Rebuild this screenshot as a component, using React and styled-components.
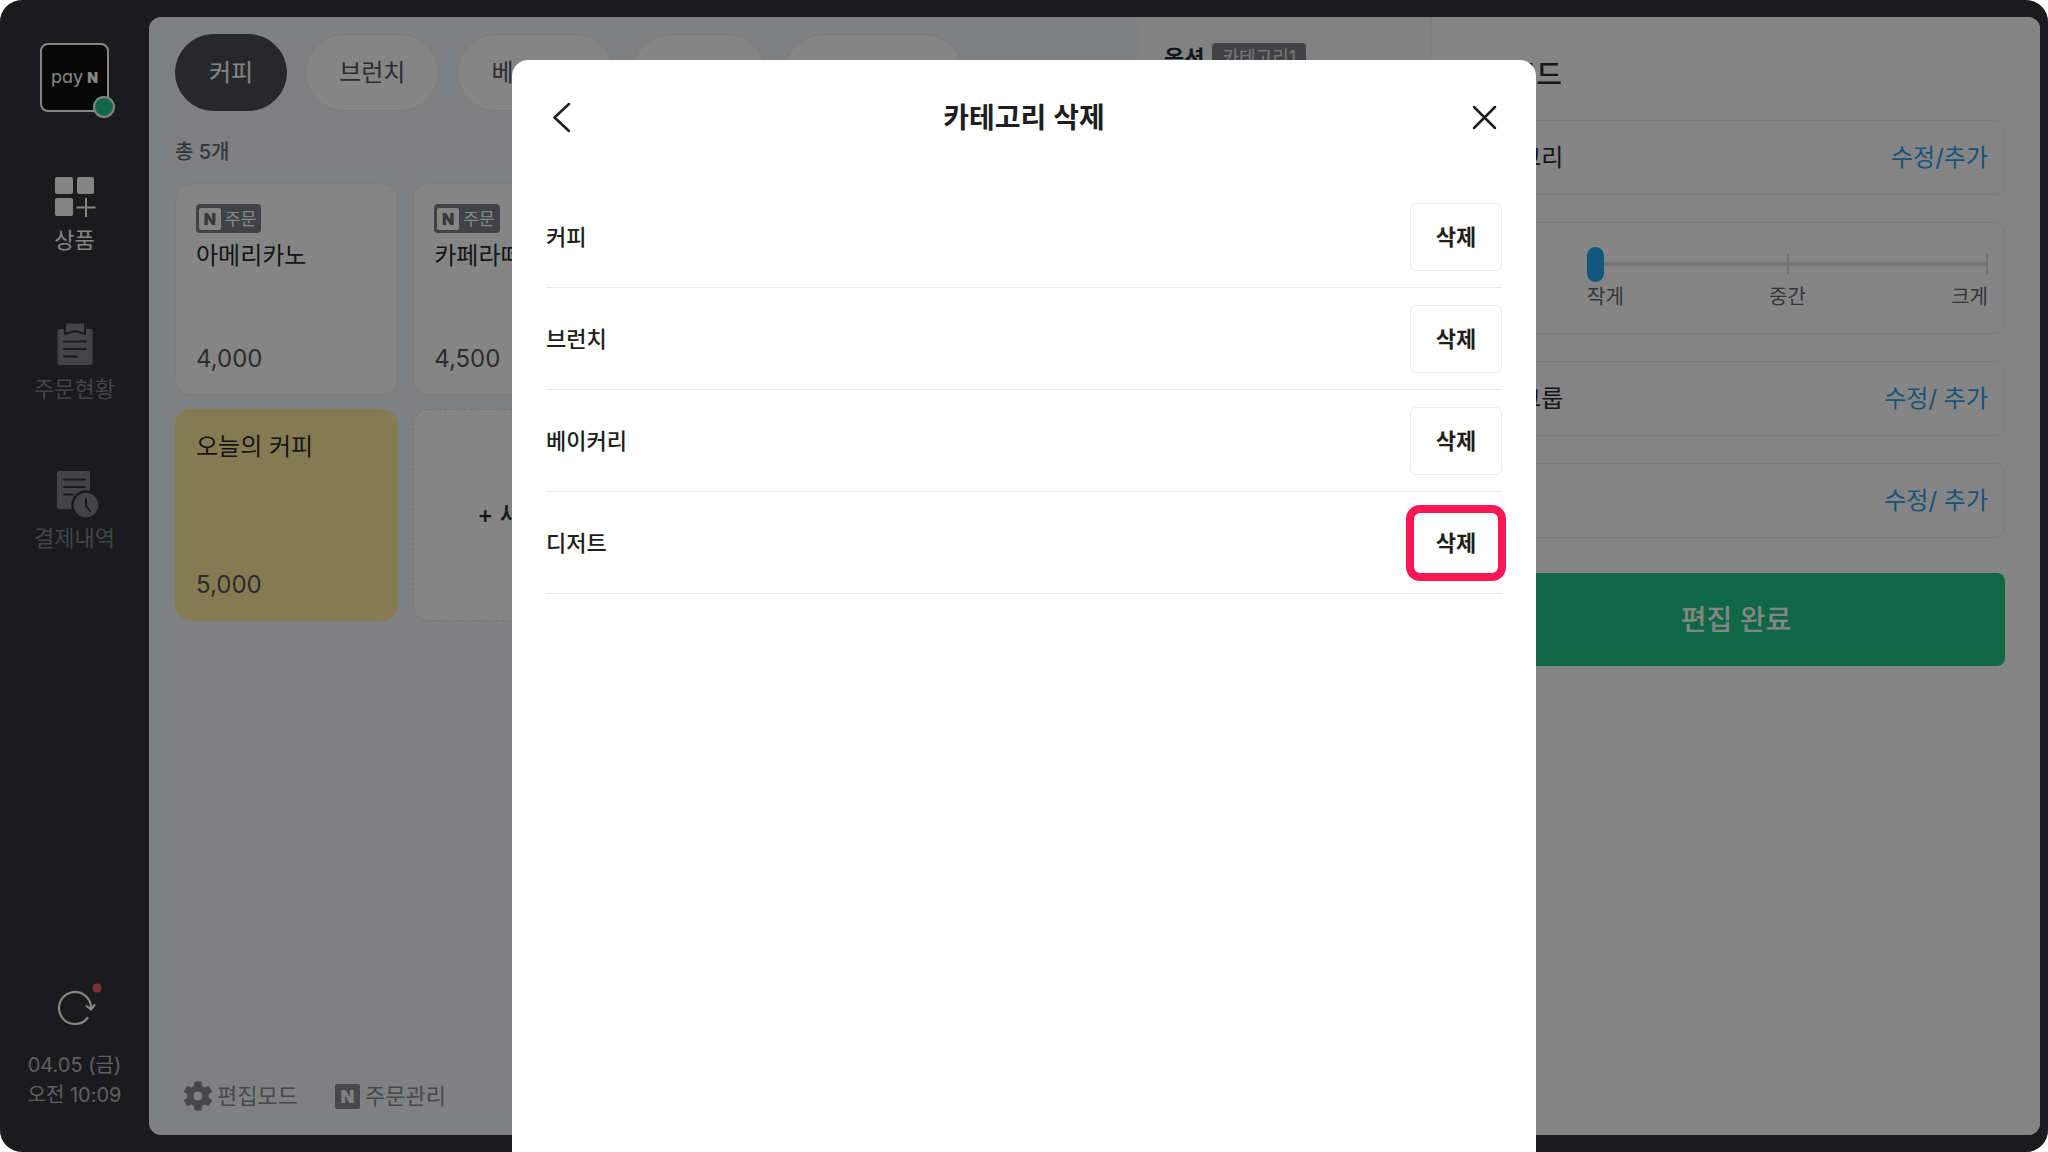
import React, { useState } from 'react'
import styled, { createGlobalStyle, css } from 'styled-components'

const GlobalStyle = createGlobalStyle`
  * {
    box-sizing: border-box;
  }

  body {
    margin: 0;
    background: #fff;
    color: #2a2b2e;
    font-family: Inter, "Noto Sans CJK KR", sans-serif;
    font-size: 24px;
    line-height: 34px;
  }

  button, input {
    margin: 0;
    padding: 0;
    border: none;
    background: none;
    color: inherit;
    font: inherit;
    cursor: pointer;
  }

  h1, h2, p, ul {
    margin: 0;
    padding: 0;
    font: inherit;
    list-style: none;
  }

  svg {
    display: block;
    overflow: visible;
  }
`

const Frame = styled.div`
  position: relative;
  display: flex;
  height: 100vh;
  padding: 17px 8px 17px 0;
  overflow: hidden;
  border-radius: 22px;
  background: #353539;
`

/* sidebar */

const Sidebar = styled.aside`
  display: flex;
  flex: 0 0 149px;
  flex-direction: column;
  align-items: center;
  padding: 26px 0 25px;
`

const Logo = styled.div`
  position: relative;
  display: flex;
  align-items: baseline;
  justify-content: center;
  gap: 4px;
  width: 69px;
  height: 69px;
  padding-top: 18px;
  border: 2px solid #fff;
  border-radius: 8px;
  background: #101010;
  color: #fff;
  font-size: 18px;
  font-feature-settings: 'cv11';
  line-height: 28px;
`

const LogoMark = styled.span`
  font-size: 14px;
  font-weight: 900;
`

const Status = styled.span`
  position: absolute;
  right: -8px;
  bottom: -8px;
  width: 22px;
  height: 22px;
  border: 2px solid #fff;
  border-radius: 50%;
  background: #1cc784;
`

const Menu = styled.nav`
  display: flex;
  flex: 1;
  flex-direction: column;
  gap: 63px;
  padding-top: 58px;
`

const MenuItem = styled.button`
  display: flex;
  flex-direction: column;
  align-items: center;
  gap: 2px;
  color: ${props => props.$active ? '#fff' : '#7f8388'};
  font-size: 22px;
  line-height: 32px;

  svg {
    width: 48px;
    height: 52px;
  }
`

const Refresh = styled.button`
  margin-bottom: 18px;
  color: #fff;
`

const Clock = styled.p`
  color: #b4b5b8;
  font-size: 20px;
  line-height: 30px;
  text-align: center;
`

/* screen */

const Screen = styled.div`
  display: flex;
  flex: 1;
  overflow: hidden;
  border-radius: 12px;
  background: #f4f6f8;
`

const Products = styled.main`
  display: flex;
  flex: 1;
  flex-direction: column;
  padding: 17px 25px 23px 26px;
`

const Tabs = styled.div`
  display: flex;
  gap: 18px;
`

const Tab = styled.button`
  height: 77px;
  padding: 0 33px;
  border: 1px solid ${props => props.$active ? '#4b4d51' : '#e8eaec'};
  border-radius: 39px;
  background: ${props => props.$active ? '#4b4d51' : '#fff'};
  color: ${props => props.$active ? '#fff' : '#55575b'};
`

const Total = styled.p`
  margin: 27px 0 16px;
  color: #66686c;
  font-size: 20px;
  font-weight: 500;
  line-height: 29px;
`

const Grid = styled.ul`
  display: grid;
  flex: 1;
  grid-template-columns: repeat(4, 1fr);
  grid-auto-rows: 212px;
  align-content: start;
  gap: 14px 15px;
`

const cardShape = css`
  width: 100%;
  height: 100%;
  border: 1px solid #eceef0;
  border-radius: 16px;
  background: #fff;
`

const Card = styled.button`
  ${cardShape}
  display: flex;
  flex-direction: column;
  align-items: flex-start;
  padding: 20px 20px 18px;
  ${props => props.$highlight && css`
    border-color: #ffeb9e;
    background: #ffeb9e;
  `}
`

const AddCard = styled.button`
  ${cardShape}
  border: 1px dashed #dcdee0;
  font-weight: 500;
`

const OrderBadge = styled.span`
  display: flex;
  align-items: center;
  gap: 4px;
  height: 29px;
  margin-bottom: 6px;
  padding: 0 5px 0 3px;
  border-radius: 4px;
  background: #7c7f86;
  color: #fff;
  font-size: 17px;
`

const NMark = styled.span`
  width: 22px;
  height: 22px;
  border-radius: 2px;
  background: #fff;
  color: #6a6c70;
  font-size: 16px;
  font-weight: 900;
  line-height: 22px;
  text-align: center;
`

const Price = styled.span`
  margin-top: auto;
  color: #55575b;
`

const Tools = styled.div`
  display: flex;
  gap: 37px;
  padding-left: 9px;
`

const Tool = styled.button`
  display: flex;
  align-items: center;
  gap: 5px;
  color: #878a8f;
  font-size: 22px;
  line-height: 32px;
`

const ToolMark = styled(NMark)`
  width: 25px;
  height: 25px;
  background: #878a8f;
  color: #f4f6f8;
  font-size: 18px;
  line-height: 25px;
`

const Options = styled.section`
  flex: 0 0 294px;
  padding: 26px;
  border-right: 1px solid #eeeff1;
  background: #f9fafc;
`

const OptionHead = styled.div`
  display: flex;
  align-items: center;
  gap: 8px;
  color: #2a2b2e;
  font-size: 22px;
  font-weight: 700;
  line-height: 30px;
`

const CategoryBadge = styled.span`
  padding: 0 10px;
  border-radius: 4px;
  background: #7c7f86;
  color: #e6e7ea;
  font-size: 18px;
  font-weight: 400;
`

/* edit panel */

const EditPanel = styled.section`
  display: flex;
  flex: 0 0 608px;
  flex-direction: column;
  gap: 27px;
  padding: 40px 35px 40px 27px;
  background: #fff;
`

const EditTitle = styled.h2`
  font-size: 28px;
  font-weight: 500;
  line-height: 36px;
`

const EditRow = styled.div`
  display: flex;
  align-items: center;
  justify-content: space-between;
  min-height: ${props => props.$tall ? '112px' : '75px'};
  padding: 0 16px 0 15px;
  border: 1px solid #f0f0f0;
  border-radius: 10px;
`

const EditLink = styled.a`
  color: #2f9fe8;
  text-decoration: none;
`

const SizeField = styled.div`
  display: flex;
  flex: 0 0 401px;
  flex-direction: column;
  padding-top: 3px;
`

const SizeSlider = styled.input`
  width: 100%;
  height: 35px;
  appearance: none;
  background:
    linear-gradient(#dcdcdc, #dcdcdc) 50% 50% / 2px 20px no-repeat,
    linear-gradient(#dcdcdc, #dcdcdc) 100% 50% / 2px 20px no-repeat,
    linear-gradient(#e2e2e2, #e2e2e2) 0 50% / 100% 4px no-repeat;

  &::-webkit-slider-thumb {
    width: 17px;
    height: 35px;
    appearance: none;
    border-radius: 9px;
    background: #22a6f2;
  }
`

const SizeLabels = styled.div`
  display: flex;
  justify-content: space-between;
  color: #66686c;
  font-size: 20px;
  line-height: 31px;
`

const DoneButton = styled.button`
  height: 93px;
  margin: 8px 0 0 8px;
  border-radius: 8px;
  background: #1cc784;
  color: #fff;
  font-size: 28px;
  font-weight: 500;
`

/* modal */

const Scrim = styled.div`
  position: absolute;
  inset: 0;
  display: flex;
  justify-content: center;
  padding-top: 60px;
  background: rgba(0, 0, 0, 0.48);
`

const Modal = styled.section`
  width: 50%;
  padding: 0 34px;
  border-radius: 16px 16px 0 0;
  background: #fff;
  color: #1e1e20;
`

const ModalHead = styled.header`
  display: flex;
  align-items: center;
  justify-content: space-between;
  height: 116px;
  margin-bottom: 10px;
`

const ModalTitle = styled.h1`
  font-size: 28px;
  font-weight: 600;
  line-height: 40px;
`

const CategoryRow = styled.li`
  display: flex;
  align-items: center;
  justify-content: space-between;
  height: 102px;
  border-bottom: 1px solid #e9e9e9;
  font-size: 22px;
  font-weight: 500;
`

const DeleteButton = styled.button`
  position: relative;
  width: 92px;
  height: 68px;
  border: 1px solid #ebebeb;
  border-radius: 6px;
  font-weight: 600;

  ${props => props.$marked && css`
    &::after {
      content: '';
      position: absolute;
      inset: -5px;
      border: 8px solid #ff1654;
      border-radius: 14px;
    }
  `}
`

const ProductIcon = () => (
  <svg viewBox='0 0 48 52' fill='currentColor'>
    <rect x='4' y='7' width='18' height='17' rx='2' />
    <rect x='26' y='7' width='17' height='17' rx='2' />
    <rect x='4' y='28' width='18' height='18' rx='2' />
    <path d='M34 28h2v8.500h8.500v2H36V47h-2v-8.500h-8.500v-2H34z' />
  </svg>
)

const OrderIcon = () => (
  <svg viewBox='0 0 48 52'>
    <path fill='currentColor' d='M8.500 10h31a2 2 0 0 1 2 2v32a2 2 0 0 1-2 2h-31a2 2 0 0 1-2-2V12a2 2 0 0 1 2-2z' />
    <path fill='currentColor' stroke='#353539' strokeWidth='2' d='M14 3.500h20V15l-10-3-10 3z' />
    <path stroke='#353539' strokeWidth='2' strokeLinecap='round' d='M13 22.500h22M13 30h22M13 37.500h13' />
  </svg>
)

const PaymentIcon = () => (
  <svg viewBox='0 0 48 52'>
    <path fill='currentColor' d='M8 3h29a2 2 0 0 1 2 2v36H8a2 2 0 0 1-2-2V5a2 2 0 0 1 2-2z' />
    <path stroke='#353539' strokeWidth='2' strokeLinecap='round' d='M13 11.500h21M13 19h21M13 26.500h9' />
    <circle cx='35' cy='37' r='13.500' fill='currentColor' stroke='#353539' strokeWidth='2.500' />
    <path fill='none' stroke='#353539' strokeWidth='2' strokeLinecap='round' d='M35 31v7l4 5' />
  </svg>
)

const RefreshIcon = () => (
  <svg width='48' height='48' viewBox='0 0 48 48' fill='none' stroke='currentColor' strokeWidth='2.200' strokeLinecap='round' strokeLinejoin='round'>
    <path d='M36.500 34a16 16 0 1 1 3.500-10' />
    <path d='M35.500 22l4.500 3.500 3.500-4.500' />
    <circle cx='46' cy='4' r='4.500' fill='#f0606a' stroke='none' />
  </svg>
)

const GearIcon = () => (
  <svg width='28' height='30' viewBox='3 2 18 20' fill='currentColor'>
    <path d='M19.140 12.940c.04-.3.060-.61.060-.94 0-.32-.02-.64-.07-.94l2.030-1.580a.49.49 0 0 0 .12-.61l-1.920-3.320a.488.488 0 0 0-.59-.22l-2.390.96c-.5-.38-1.030-.7-1.620-.94l-.36-2.540a.484.484 0 0 0-.48-.41h-3.840c-.24 0-.43.170-.47.410l-.36 2.540c-.59.240-1.130.570-1.620.940l-2.390-.96c-.22-.08-.47 0-.59.220L2.740 8.870c-.12.210-.08.470.12.610l2.030 1.580c-.05.300-.09.630-.09.940s.02.640.07.940l-2.030 1.580a.49.49 0 0 0-.12.610l1.920 3.320c.12.220.37.290.59.220l2.390-.96c.5.380 1.030.700 1.620.940l.36 2.540c.05.240.24.410.48.410h3.840c.24 0 .44-.17.47-.41l.36-2.540c.59-.24 1.130-.56 1.620-.94l2.390.96c.22.080.47 0 .59-.22l1.920-3.320c.12-.22.070-.47-.12-.61l-2.010-1.580zM12 15a3 3 0 1 1 0-6 3 3 0 0 1 0 6z' />
  </svg>
)

const BackIcon = () => (
  <svg width='32' height='32' viewBox='0 0 32 32' fill='none' stroke='currentColor' strokeWidth='2.500' strokeLinecap='round' strokeLinejoin='round'>
    <path d='M23 2L8.500 15.500 23 29' />
  </svg>
)

const CloseIcon = () => (
  <svg width='32' height='32' viewBox='0 0 32 32' fill='none' stroke='currentColor' strokeWidth='2.500' strokeLinecap='round'>
    <path d='M4 5l21 21M25 5L4 26' />
  </svg>
)

const tabs = ['커피', '브런치', '베이커리', '디저트', '카테고리 +']

const products = [
  { name: '아메리카노', price: '4,000', order: true },
  { name: '카페라떼', price: '4,500', order: true },
  { name: '카푸치노', price: '4,500', order: true },
  { name: '바닐라라떼', price: '5,000', order: true },
  { name: '오늘의 커피', price: '5,000', highlight: true }
]

const categories = ['커피', '브런치', '베이커리', '디저트']

const App = () => {
  const [size, setSize] = useState(0)

  return (
    <Frame>
      <GlobalStyle />
      <Sidebar>
        <Logo>
          pay<LogoMark>N</LogoMark>
          <Status />
        </Logo>
        <Menu>
          <MenuItem $active><ProductIcon />상품</MenuItem>
          <MenuItem><OrderIcon />주문현황</MenuItem>
          <MenuItem><PaymentIcon />결제내역</MenuItem>
        </Menu>
        <Refresh aria-label='새로고침'><RefreshIcon /></Refresh>
        <Clock>04.05 (금)<br />오전 10:09</Clock>
      </Sidebar>

      <Screen>
        <Products>
          <Tabs>
            {tabs.map((tab, i) => <Tab key={tab} $active={i === 0}>{tab}</Tab>)}
          </Tabs>
          <Total>총 5개</Total>
          <Grid>
            {products.map(product => (
              <li key={product.name}>
                <Card $highlight={product.highlight}>
                  {product.order && <OrderBadge><NMark>N</NMark>주문</OrderBadge>}
                  <span>{product.name}</span>
                  <Price>{product.price}</Price>
                </Card>
              </li>
            ))}
            <li><AddCard>+ 새 상품</AddCard></li>
          </Grid>
          <Tools>
            <Tool><GearIcon />편집모드</Tool>
            <Tool><ToolMark>N</ToolMark>주문관리</Tool>
          </Tools>
        </Products>

        <Options>
          <OptionHead>옵션 <CategoryBadge>카테고리1</CategoryBadge></OptionHead>
        </Options>

        <EditPanel>
          <EditTitle>편집모드</EditTitle>
          <EditRow>
            카테고리
            <EditLink href='#category'>수정/추가</EditLink>
          </EditRow>
          <EditRow $tall>
            <label htmlFor='size'>크기</label>
            <SizeField>
              <SizeSlider
                id='size'
                type='range'
                min='0'
                max='2'
                value={size}
                onChange={event => setSize(event.target.value)} />
              <SizeLabels>
                <span>작게</span>
                <span>중간</span>
                <span>크게</span>
              </SizeLabels>
            </SizeField>
          </EditRow>
          <EditRow>
            옵션그룹
            <EditLink href='#group'>수정/ 추가</EditLink>
          </EditRow>
          <EditRow>
            옵션
            <EditLink href='#option'>수정/ 추가</EditLink>
          </EditRow>
          <DoneButton>편집 완료</DoneButton>
        </EditPanel>
      </Screen>

      <Scrim>
        <Modal role='dialog' aria-labelledby='modal-title'>
          <ModalHead>
            <button aria-label='뒤로'><BackIcon /></button>
            <ModalTitle id='modal-title'>카테고리 삭제</ModalTitle>
            <button aria-label='닫기'><CloseIcon /></button>
          </ModalHead>
          <ul>
            {categories.map(category => (
              <CategoryRow key={category}>
                {category}
                <DeleteButton $marked={category === '디저트'}>삭제</DeleteButton>
              </CategoryRow>
            ))}
          </ul>
        </Modal>
      </Scrim>
    </Frame>
  )
}

export default App
